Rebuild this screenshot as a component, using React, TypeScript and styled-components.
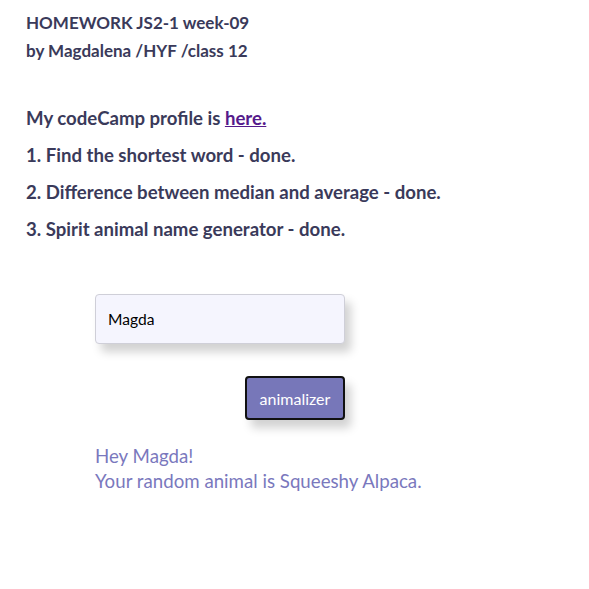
import { FC, useState } from "react"
import styled, { createGlobalStyle } from "styled-components"

const GlobalStyle = createGlobalStyle`
  body {
    margin: 0;
    background: #fff;
    font-family: Lato, "Open Sans", sans-serif;
  }
`

const App: FC = () => {
  const [name, setName] = useState("Magda")

  return (
    <>
      <GlobalStyle />
      <Page>
        <Heading>
          HOMEWORK JS2-1 week-09
          <br />
          by Magdalena /HYF /class 12
        </Heading>
        <Tasks>
          <Task>
            My codeCamp profile is <ProfileLink href="#">here.</ProfileLink>
          </Task>
          <Task>1. Find the shortest word - done.</Task>
          <Task>2. Difference between median and average - done.</Task>
          <Task>3. Spirit animal name generator - done.</Task>
        </Tasks>
        <Generator>
          <NameInput value={name} onChange={(e) => setName(e.target.value)} />
          <AnimalButton>animalizer</AnimalButton>
          <Result>
            Hey Magda!
            <br />
            Your random animal is Squeeshy Alpaca.
          </Result>
        </Generator>
      </Page>
    </>
  )
}

export default App

const Page = styled.div`
  padding: 9px 26px 40px;
  color: #3a3a5a;
`

const Heading = styled.h1`
  margin: 0;
  font-size: 17px;
  font-weight: 700;
  line-height: 28px;
`

const Tasks = styled.div`
  margin-top: 42px;
  display: flex;
  flex-direction: column;
  gap: 14px;
`

const Task = styled.p`
  margin: 0;
  font-size: 18.6px;
  font-weight: 700;
  line-height: 23px;
`

const ProfileLink = styled.a`
  color: #551a8b;
  text-decoration: underline;
`

const Generator = styled.div`
  margin: 53px 0 0 69px;
  width: 250px;
  display: flex;
  flex-direction: column;
`

const NameInput = styled.input`
  box-sizing: border-box;
  width: 250px;
  height: 50px;
  padding: 0 12px;
  border: 1px solid #cfcfd8;
  border-radius: 4px;
  background: #f5f5fe;
  font-family: Lato, "Open Sans", sans-serif;
  font-size: 15.6px;
  color: #000;
  box-shadow: 6px 8px 10px rgba(0, 0, 0, 0.18);
  outline: none;
`

const AnimalButton = styled.button`
  align-self: flex-end;
  margin-top: 32px;
  box-sizing: border-box;
  width: 100px;
  height: 44px;
  border: 2px solid #111;
  border-radius: 4px;
  background: #7777b9;
  color: #fff;
  font-family: Lato, "Open Sans", sans-serif;
  font-size: 16px;
  box-shadow: 6px 8px 10px rgba(0, 0, 0, 0.18);
  cursor: pointer;
`

const Result = styled.p`
  margin: 24px 0 0;
  width: 420px;
  font-size: 18.7px;
  line-height: 25px;
  color: #7a78bd;
`
